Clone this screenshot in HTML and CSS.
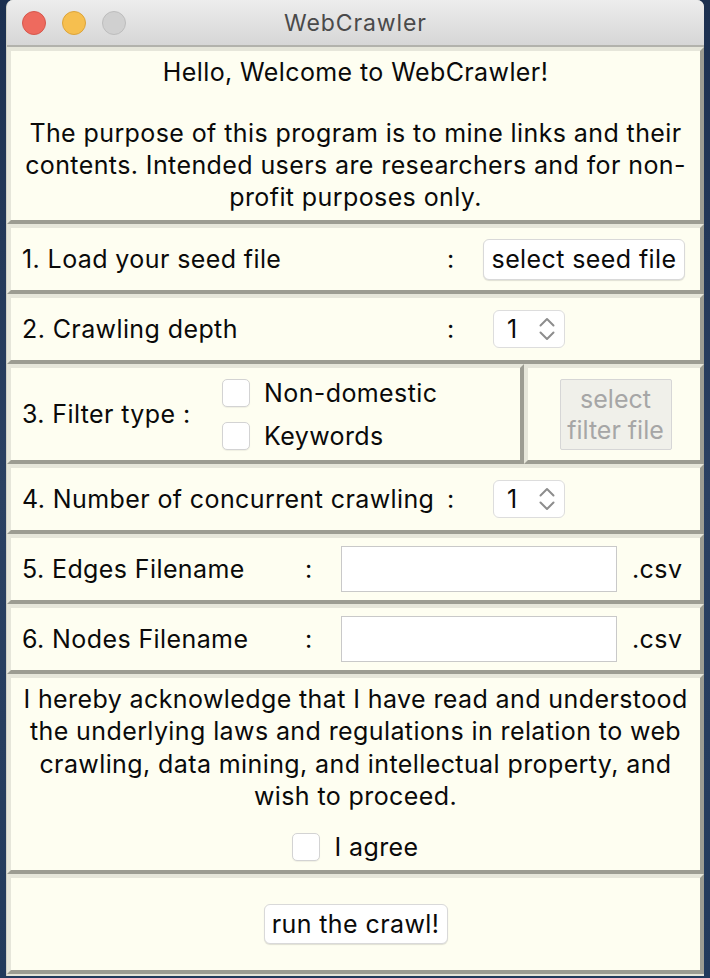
FILE: index.html
```html
<!DOCTYPE html>
<html>
<head>
<meta charset="utf-8">
<title>WebCrawler</title>
<link rel="stylesheet" href="styles.css">
</head>
<body>
<div class="window">
  <div class="titlebar">
    <div class="lights"><span class="light red"></span><span class="light yellow"></span><span class="light gray"></span></div>
    <div class="title">WebCrawler</div>
    <div></div>
  </div>
  <div class="content">
    <div class="panel intro">
      <div class="hello">Hello, Welcome to WebCrawler!</div>
      <div class="purpose">The purpose of this program is to mine links and their<br>contents. Intended users are researchers and for non-<br>profit purposes only.</div>
    </div>

    <div class="panel row">
      <span class="lbl wide">1. Load your seed file</span><span class="colon">:</span>
      <button class="btn seed">select seed file</button>
    </div>

    <div class="panel row">
      <span class="lbl wide">2. Crawling depth</span><span class="colon">:</span>
      <div class="spin"><span class="num">1</span><svg class="arrows" width="18" height="28" viewBox="0 0 18 28"><path d="M2.5 10.5 L9 4 L15.5 10.5" /><path d="M2.5 17.5 L9 24 L15.5 17.5" /></svg></div>
    </div>

    <div class="split">
      <div class="panel filter">
        <span class="lbl ftype">3. Filter type :</span>
        <div class="checks">
          <div class="check"><span class="cb"></span><span>Non-domestic</span></div>
          <div class="check"><span class="cb"></span><span>Keywords</span></div>
        </div>
      </div>
      <div class="panel filefilter">
        <div class="dbtn">select<br>filter file</div>
      </div>
    </div>

    <div class="panel row">
      <span class="lbl wide">4. Number of concurrent crawling</span><span class="colon">:</span>
      <div class="spin"><span class="num">1</span><svg class="arrows" width="18" height="28" viewBox="0 0 18 28"><path d="M2.5 10.5 L9 4 L15.5 10.5" /><path d="M2.5 17.5 L9 24 L15.5 17.5" /></svg></div>
    </div>

    <div class="panel row">
      <span class="lbl short">5. Edges Filename</span><span class="colon">:</span>
      <div class="field"></div><span class="ext">.csv</span>
    </div>

    <div class="panel row">
      <span class="lbl short">6. Nodes Filename</span><span class="colon">:</span>
      <div class="field"></div><span class="ext">.csv</span>
    </div>

    <div class="panel ack">
      <div class="acktext">I hereby acknowledge that I have read and understood<br>the underlying laws and regulations in relation to web<br>crawling, data mining, and intellectual property, and<br>wish to proceed.</div>
      <div class="agree"><span class="cb"></span><span>I agree</span></div>
    </div>

    <div class="panel run">
      <button class="btn runbtn">run the crawl!</button>
    </div>
  </div>
</div>
</body>
</html>
```

FILE: styles.css
```css
* { box-sizing: border-box; }
html, body {
  margin: 0;
  padding: 0;
}
body {
  width: 710px;
  height: 978px;
  overflow: hidden;
  background: linear-gradient(180deg, #1c3050 0%, #2a4062 50%, #223a5c 100%);
  font-family: Inter, "Noto Sans", sans-serif;
  color: #0a0a0a;
}
.window {
  margin-left: 6px;
  width: 698px;
  height: 976px;
  background: #e4e4d8;
  border-radius: 7px 7px 0 0;
  overflow: hidden;
  border-left: 1px solid #cfcfc6;
}
.titlebar {
  height: 47px;
  border-bottom: 2px solid #b2b2ac;
  background: linear-gradient(180deg, #ededed 0%, #d6d6d6 100%);
  display: grid;
  grid-template-columns: 1fr auto 1fr;
  align-items: center;
}
.lights {
  display: flex;
  gap: 16px;
  padding-left: 15px;
}
.light {
  width: 24px;
  height: 24px;
  border-radius: 50%;
  display: block;
}
.red { background: #ee6a5e; border: 1px solid #d6574c; }
.yellow { background: #f6bf4f; border: 1px solid #dca43a; }
.gray { background: #d0d0d0; border: 1px solid #bdbdbd; }
.title {
  font-size: 23px;
  letter-spacing: 0.9px;
  color: #4a4a4a;
}
.panel {
  background: #fefef1;
  border-style: solid;
  border-width: 4px;
  border-color: #e6e6da #9c9c92 #9c9c92 #e6e6da;
  font-size: 25px;
  letter-spacing: 0.4px;
}
.intro {
  height: 177px;
  text-align: center;
  padding-top: 5px;
}
.hello {
  line-height: 32px;
}
.purpose {
  margin-top: 29px;
  line-height: 32px;
  white-space: nowrap;
}
.row {
  height: 70px;
  display: flex;
  align-items: center;
  padding-left: 11px;
}
.lbl {
  white-space: nowrap;
  display: block;
}
.lbl.wide { width: 425px; }
.lbl.short { width: 283px; }
.colon {
  display: block;
  width: 7px;
}
.btn {
  font: inherit;
  letter-spacing: inherit;
  color: inherit;
  background: #ffffff;
  border: 1px solid #d9d9d9;
  border-radius: 6px;
  box-shadow: 0 1px 1px rgba(0, 0, 0, 0.12);
  padding: 0;
  height: 41px;
}
.seed {
  margin-left: 29px;
  width: 202px;
}
.spin {
  margin-left: 39px;
  width: 72px;
  height: 38px;
  background: #ffffff;
  border: 1px solid #dddddd;
  border-radius: 6px;
  display: flex;
  align-items: center;
  padding-left: 13px;
  padding-right: 8px;
}
.num { display: block; }
.arrows {
  margin-left: auto;
  fill: none;
  stroke: #8d8d8d;
  stroke-width: 2;
  stroke-linecap: round;
  stroke-linejoin: round;
}
.split {
  display: flex;
  height: 100px;
}
.filter {
  width: 517px;
  height: 100px;
  display: flex;
  align-items: center;
  padding-left: 11px;
}
.ftype { width: 200px; }
.checks {
  display: flex;
  flex-direction: column;
  gap: 15px;
}
.check, .agree {
  display: flex;
  align-items: center;
  gap: 14px;
  height: 28px;
}
.cb {
  display: block;
  width: 28px;
  height: 28px;
  background: #ffffff;
  border: 1px solid #d3d3d3;
  border-radius: 5px;
  box-shadow: 0 1px 1px rgba(0, 0, 0, 0.06);
}
.filefilter {
  flex: 1;
  height: 100px;
  display: flex;
  align-items: center;
  justify-content: center;
  padding-left: 3px;
}
.dbtn {
  width: 112px;
  height: 71px;
  background: #f0f0ea;
  border: 1px solid #d6d6d6;
  border-radius: 2px;
  color: #a6a6a6;
  text-align: center;
  line-height: 31px;
  padding-top: 4px;
  letter-spacing: 0;
}
.field {
  margin-left: 29px;
  width: 276px;
  height: 46px;
  background: #ffffff;
  border: 1px solid #c9c9c9;
}
.ext {
  margin-left: 15px;
}
.ack {
  height: 200px;
  text-align: center;
  padding-top: 5px;
  display: flex;
  flex-direction: column;
  align-items: center;
}
.acktext {
  line-height: 32.3px;
  white-space: nowrap;
}
.agree {
  margin-top: 21px;
}
.run {
  height: 100px;
  display: flex;
  align-items: center;
  justify-content: center;
}
.runbtn {
  width: 184px;
  height: 40px;
}
```
